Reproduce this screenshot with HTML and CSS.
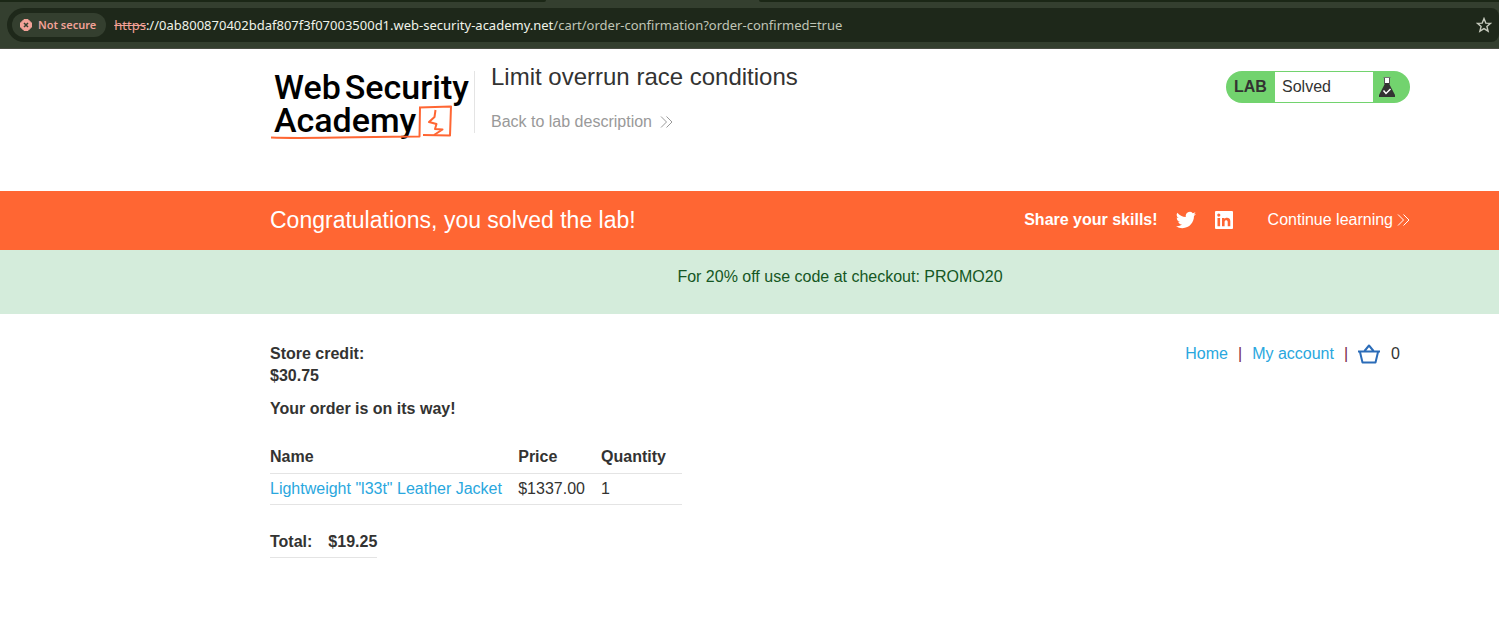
FILE: index.html
```html
<!DOCTYPE html>
<html lang="en">
<head>
<meta charset="utf-8">
<title>Limit overrun race conditions</title>
<link rel="stylesheet" href="styles.css">
</head>
<body>
<div class="browser">
  <div class="tabstrip"><span class="tabs-before"></span><span class="tab-active"></span><span class="tabs-after"></span></div>
  <div class="toolbar">
    <div class="omnibox">
      <button class="security" type="button">
        <svg width="12" height="12" viewBox="0 0 12 12" aria-hidden="true"><path d="M4 .5h4L11.500 4v4L8 11.500H4L.5 8V4z" fill="#f3a298" stroke="#f3a298" stroke-linejoin="round"/><path d="M4 4l4 4M8 4l-4 4" stroke="#343f2f" stroke-width="1.5"/></svg>
        <span>Not secure</span>
      </button>
      <div class="url"><s class="scheme">https</s><span class="host">://0ab800870402bdaf807f3f07003500d1.web-security-academy.net</span><span>/cart/order-confirmation?order-confirmed=true</span></div>
      <button class="bookmark" type="button" aria-label="Bookmark this page">
        <svg width="16" height="16" viewBox="0 0 16 16" aria-hidden="true"><path d="M8 1.6l1.8 4.5 4.7.3-3.6 3.1 1.2 4.7L8 11.6l-4.1 2.6 1.2-4.7-3.6-3.1 4.7-.3z" fill="none" stroke="#c6cabd" stroke-width="1.4"/></svg>
      </button>
    </div>
  </div>
</div>

<header class="lab-header container">
  <a class="logo" href="#">
    <span class="logo-line"><span>Web</span><span>Security</span></span>
    <span class="logo-line">Academy</span>
    <svg class="logo-mark" width="184" height="36" viewBox="0 0 184 36" aria-hidden="true"><g fill="none" stroke="#ff6633" stroke-width="2" stroke-linejoin="round"><path d="M1 32.500C40 34 95 31.500 149.500 31.500L150 2.500"/><path d="M149 2.500L181 1.500L180 30.500L153 30"/><path d="M165.500 5L164.500 12L159 17L166.500 19L165 24L172.500 24.500L164 30"/></g></svg>
  </a>
  <div class="lab-title">
    <h1>Limit overrun race conditions</h1>
    <a class="back" href="#">Back to lab description
      <svg width="13" height="12" viewBox="0 0 13 12" aria-hidden="true"><path d="M1 .5L6.500 6L1 11.500M6.500 .5L12 6L6.500 11.500" fill="none" stroke="currentColor"/></svg>
    </a>
  </div>
  <div class="status">
    <span class="status-label">LAB</span>
    <span class="status-text">Solved</span>
    <svg width="16" height="20" viewBox="0 0 16 20" aria-hidden="true"><path d="M5.500 1v6h5V1z" fill="#fff"/><path d="M5.500 6h5v1.500L16 18v2H0v-2L5.500 7.500z" fill="#333332"/><path d="M4.500 .5h7" stroke="#777"/><path d="M5.500 1v6M10.500 1v6" stroke="#555"/><path d="M4.500 13.500l2.500 3 4.500-4.500" fill="none" stroke="#fff" stroke-width="1.500"/></svg>
  </div>
</header>

<section class="solved">
  <div class="solved-row container">
    <h2>Congratulations, you solved the lab!</h2>
    <div class="share">
      <strong>Share your skills!</strong>
      <a href="#" aria-label="Share on Twitter"><svg width="20" height="20" viewBox="0 0 24 24" aria-hidden="true"><path fill="#fff" d="M23.950 4.570a10 10 0 0 1-2.820.770 4.960 4.960 0 0 0 2.160-2.720c-.950.550-2 .950-3.130 1.180a4.920 4.920 0 0 0-8.380 4.480C7.690 8.090 4.070 6.130 1.640 3.160a4.920 4.920 0 0 0 1.520 6.570 4.900 4.900 0 0 1-2.230-.610v.060a4.920 4.920 0 0 0 3.950 4.830 5 5 0 0 1-2.210.080 4.940 4.940 0 0 0 4.600 3.420A9.870 9.870 0 0 1 0 19.540a13.990 13.990 0 0 0 7.550 2.210c9.050 0 14-7.500 14-13.980l-.020-.640a9.940 9.940 0 0 0 2.420-2.560z"/></svg></a>
      <a href="#" aria-label="Share on LinkedIn"><svg width="20" height="20" viewBox="0 0 20 20" aria-hidden="true"><rect x="1" y="1" width="18" height="18" rx="1" fill="#fff"/><path fill="#ff6633" d="M3.500 8h2.600v8.300H3.500zM4.800 3.500a1.600 1.600 0 1 1 0 3.200 1.600 1.600 0 0 1 0-3.200zM8 8h2.500v1.100c1-1.800 5.800-2 5.800 2v5.200h-2.600v-4.400c0-2.200-3.100-2.100-3.100 0v4.400H8z"/></svg></a>
    </div>
    <a class="continue" href="#">Continue learning
      <svg width="13" height="12" viewBox="0 0 13 12" aria-hidden="true"><path d="M1 .5L6.500 6L1 11.500M6.500 .5L12 6L6.500 11.500" fill="none" stroke="currentColor"/></svg>
    </a>
  </div>
</section>

<section class="promo"><p class="container">For 20% off use code at checkout: PROMO20</p></section>

<main class="container">
  <div class="top-row">
    <p class="credit">Store credit:<br>$30.75</p>
    <nav class="links">
      <a href="#">Home</a><span class="bar">|</span>
      <a href="#">My account</a><span class="bar">|</span>
      <a class="basket" href="#" aria-label="Basket"><svg width="22" height="20" viewBox="0 0 22 20" aria-hidden="true"><path d="M0 7.500h22M2 8l2.500 10.500h13L20 8M6.500 7L11 1.500l4.500 5.500" fill="none" stroke="#2b6cb8" stroke-width="2" stroke-linejoin="round"/></svg></a>
      <span class="count">0</span>
    </nav>
  </div>
  <h3>Your order is on its way!</h3>
  <table class="items">
    <thead><tr><th>Name</th><th>Price</th><th>Quantity</th></tr></thead>
    <tbody><tr><td><a href="#">Lightweight "l33t" Leather Jacket</a></td><td>$1337.00</td><td>1</td></tr></tbody>
  </table>
  <table class="total">
    <tbody><tr><th>Total:</th><th>$19.25</th></tr></tbody>
  </table>
</main>
</body>
</html>
```
FILE: styles.css
```css
* { box-sizing: border-box; }
body { margin: 0; background: #fff; color: #333332; font: 16px/22px "Liberation Sans", Arial, sans-serif; overflow-x: hidden; }
h1, h2, h3, p { margin: 0; }
a { color: #29a7de; text-decoration: none; }
button { border: 0; padding: 0; background: none; font: inherit; }
svg { display: block; }
.container { max-width: 1140px; margin-left: auto; margin-right: 89px; }

.browser { background: #343f2f; border-bottom: 1px solid #484b42; }
.tabstrip { display: flex; height: 2px; }
.tabs-before { flex: 546; background: #1b2716; border-bottom-right-radius: 4px; }
.tab-active { flex: 213; }
.tabs-after { flex: 740; background: #1b2716; border-bottom-left-radius: 4px; }
.toolbar { padding: 6px 0 6px 7px; }
.omnibox { display: flex; align-items: center; height: 34px; padding: 0 7px 0 5px; border-radius: 17px 8px 8px 17px; background: #1e281a; font: 13px/20px "Noto Sans", "Segoe UI", sans-serif; }
.security { display: flex; align-items: center; gap: 6px; height: 24px; padding: 0 10px 0 8px; border-radius: 12px; background: #343f2f; color: #f3a298; font-size: 11px; font-weight: 600; }
.url { flex: 1; margin-left: 8px; color: #c0c5b6; white-space: nowrap; }
.scheme { color: #f3a298; }
.host { color: #f0f3e9; }

.lab-header { display: flex; align-items: flex-start; height: 142px; padding-top: 22px; }
.logo { position: relative; width: 205px; height: 62px; border-right: 1px solid #e4e4e4; padding-left: 4px; color: #000; font: 500 34px/33px Roboto, sans-serif; }
.logo-line { display: flex; gap: 4px; white-space: nowrap; }
.logo-mark { position: absolute; left: 0; top: 34px; }
.lab-title { padding-left: 16px; margin-top: -8px; }
h1 { font-size: 24px; font-weight: 400; line-height: 28px; }
.back { display: flex; align-items: center; gap: 8px; margin-top: 20px; color: #999; }
.status { display: flex; align-items: center; margin-left: auto; width: 184px; height: 32px; padding: 1px 15px 1px 0; border-radius: 16px; background: #72d36e; }
.status-label { width: 49px; padding-left: 8px; font-weight: 700; }
.status-text { flex: 1; height: 30px; margin-right: 6px; padding-left: 7px; background: #fff; line-height: 30px; }

.solved { background: #ff6633; color: #fff; }
.solved-row { display: flex; align-items: center; height: 59px; padding-bottom: 2px; }
h2 { flex: 1; font-size: 23px; font-weight: 400; }
.share { display: flex; align-items: center; gap: 18px; }
.continue { display: flex; align-items: center; gap: 4px; margin-left: 34px; color: #fff; }

.promo { height: 64px; padding-top: 16px; background: #d4ecdb; color: #155724; text-align: center; }

main { padding-top: 29px; }
.top-row { display: flex; justify-content: space-between; align-items: flex-start; }
.credit, h3 { font-size: 16px; font-weight: 700; }
h3 { margin-top: 11px; }
.links { display: flex; align-items: center; padding-right: 10px; }
.bar { margin: 0 10px; color: #7a2347; }
.count { margin-left: 11px; }
table { border-collapse: collapse; }
th, td { text-align: left; border-bottom: 1px solid #e4e4e4; }
.items { width: 412px; margin-top: 22px; }
.items th, .items td { padding: 4px 16px 4px 0; }
.items th { padding-bottom: 5px; }
.total { margin-top: 22px; }
.total th { padding: 4px 16px 4px 0; }
.total th:last-child { padding-right: 0; }
```
